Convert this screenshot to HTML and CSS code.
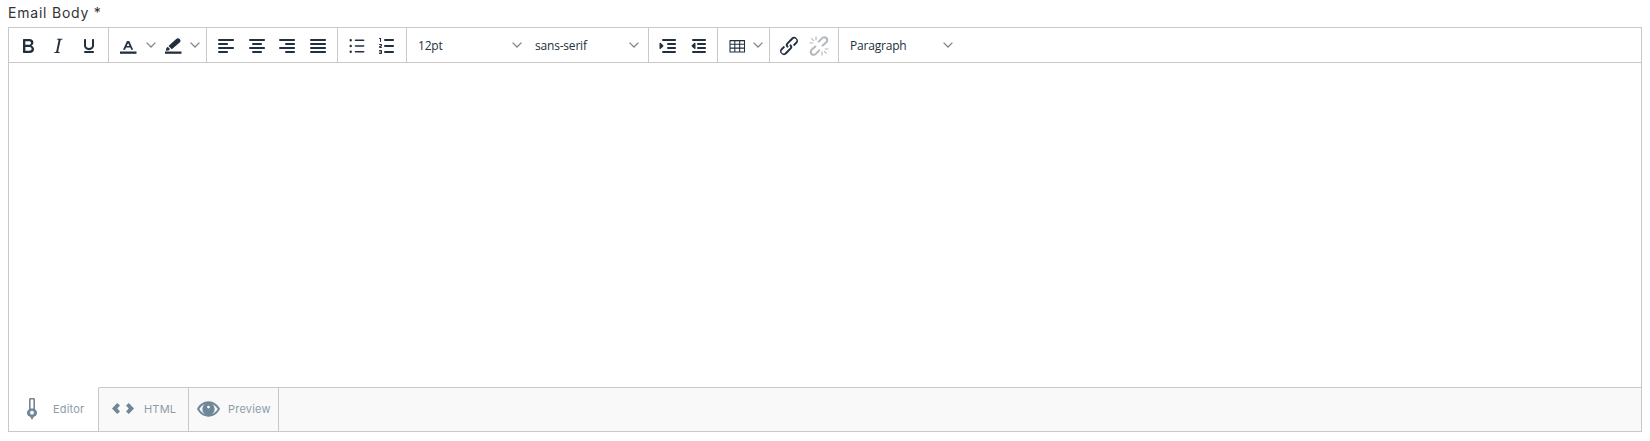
FILE: index.html
```html
<!DOCTYPE html>
<html lang="en">
<head>
<meta charset="utf-8">
<title>Email Body</title>
<link rel="stylesheet" href="styles.css">
</head>
<body>
<svg class="defs" aria-hidden="true">
  <defs>
    <symbol id="chev" viewBox="0 0 10 10"><path d="M.6 2.6 5 7 9.4 2.6" fill="none" stroke="currentColor" stroke-width="1.3"/></symbol>
    <symbol id="aleft" viewBox="0 0 24 24"><path d="M5 5h14c.6 0 1 .4 1 1s-.4 1-1 1H5a1 1 0 1 1 0-2zm0 4h8c.6 0 1 .4 1 1s-.4 1-1 1H5a1 1 0 1 1 0-2zm0 8h8c.6 0 1 .4 1 1s-.4 1-1 1H5a1 1 0 0 1 0-2zm0-4h14c.6 0 1 .4 1 1s-.4 1-1 1H5a1 1 0 0 1 0-2z"/></symbol>
    <symbol id="acenter" viewBox="0 0 24 24"><path d="M5 5h14c.6 0 1 .4 1 1s-.4 1-1 1H5a1 1 0 1 1 0-2zm3 4h8c.6 0 1 .4 1 1s-.4 1-1 1H8a1 1 0 1 1 0-2zm0 8h8c.6 0 1 .4 1 1s-.4 1-1 1H8a1 1 0 0 1 0-2zm-3-4h14c.6 0 1 .4 1 1s-.4 1-1 1H5a1 1 0 0 1 0-2z"/></symbol>
    <symbol id="aright" viewBox="0 0 24 24"><path d="M5 5h14c.6 0 1 .4 1 1s-.4 1-1 1H5a1 1 0 1 1 0-2zm6 4h8c.6 0 1 .4 1 1s-.4 1-1 1h-8a1 1 0 0 1 0-2zm0 8h8c.6 0 1 .4 1 1s-.4 1-1 1h-8a1 1 0 0 1 0-2zm-6-4h14c.6 0 1 .4 1 1s-.4 1-1 1H5a1 1 0 0 1 0-2z"/></symbol>
    <symbol id="ajust" viewBox="0 0 24 24"><path d="M5 5h14c.6 0 1 .4 1 1s-.4 1-1 1H5a1 1 0 1 1 0-2zm0 4h14c.6 0 1 .4 1 1s-.4 1-1 1H5a1 1 0 1 1 0-2zm0 4h14c.6 0 1 .4 1 1s-.4 1-1 1H5a1 1 0 0 1 0-2zm0 4h14c.6 0 1 .4 1 1s-.4 1-1 1H5a1 1 0 0 1 0-2z"/></symbol>
  </defs>
</svg>

<div class="label">Email Body *</div>

<div class="editor">
  <div class="toolbar">
    <div class="group g-format">
      <button class="btn"><svg class="ic" viewBox="0 0 24 24"><path d="M7.8 19c-.3 0-.5 0-.6-.2l-.2-.5V5.700c0-.2 0-.4.2-.5l.6-.2h5c1.500 0 2.700.3 3.500 1 .7.6 1.100 1.400 1.100 2.500a3 3 0 0 1-.6 1.900c-.4.6-1 1-1.600 1.200.4.1.9.3 1.300.6s.8.7 1 1.200c.4.4.5 1 .5 1.600 0 1.300-.4 2.300-1.300 3-.8.7-2.100 1-3.800 1H7.800zm5-8.300c.6 0 1.200-.1 1.600-.5.4-.3.6-.7.6-1.300 0-1.100-.8-1.700-2.300-1.700H9.300v3.500h3.400zm.5 6c.7 0 1.300-.1 1.700-.4.4-.4.6-.9.6-1.500s-.2-1-.7-1.400c-.4-.3-1-.4-2-.4H9.400v3.800h4z"/></svg></button>
      <button class="btn"><svg class="ic" viewBox="0 0 24 24"><path d="M16.700 4.700l-.1.9h-.3c-.6 0-1 0-1.400.3-.3.3-.4.6-.5 1.100l-2.100 9.800v.6c0 .5.4.8 1.400.8h.2l-.2.8H8l.2-.8h.2c1.100 0 1.800-.5 2-1.500l2-9.800.1-.5c0-.6-.4-.8-1.400-.8h-.3l.2-.9h5.800z"/></svg></button>
      <button class="btn"><svg class="ic" viewBox="0 0 24 24"><path d="M16 5c.6 0 1 .4 1 1v5.500a4 4 0 0 1-.4 1.800l-1 1.400a5.300 5.300 0 0 1-5.500 1 5 5 0 0 1-1.600-1c-.5-.4-.8-.9-1.100-1.400a4 4 0 0 1-.4-1.800V6c0-.6.4-1 1-1s1 .4 1 1v5.500c0 .3 0 .6.2 1l.6.7a3.300 3.300 0 0 0 2.200.8 3.400 3.400 0 0 0 2.200-.8c.3-.2.4-.5.6-.8l.2-.9V6c0-.6.4-1 1-1zM8 17h8c.6 0 1 .4 1 1s-.4 1-1 1H8a1 1 0 0 1 0-2z"/></svg></button>
    </div>
    <div class="group g-color">
      <button class="btn"><svg class="ic" viewBox="0 0 24 24"><path d="M4 17.500h16.500v2.300H4z"/><path d="M7 15.800 11 7h2.200l4 8.800h-1.900l-.9-2.200h-4.400l-.9 2.200zM10.700 12.100h2.800L12.100 8.900z"/></svg></button>
      <span class="chev-btn"><svg class="chev"><use href="#chev"/></svg></span>
      <button class="btn"><svg class="ic" viewBox="0 0 24 24"><path d="M4 17.500h16.500v2.300H4z"/><path d="M4.800 16.700l2.800-.2 1.400-1.400-2.300-2.300-1.400 1.400zM7.500 12l3.300 3.300 7.900-6.800c1.100-1 1.100-2.600 0-3.600-1-1-2.500-1-3.500 0z"/></svg></button>
      <span class="chev-btn"><svg class="chev"><use href="#chev"/></svg></span>
    </div>
    <div class="group g-align">
      <button class="btn"><svg class="ic"><use href="#aleft"/></svg></button>
      <button class="btn"><svg class="ic"><use href="#acenter"/></svg></button>
      <button class="btn"><svg class="ic"><use href="#aright"/></svg></button>
      <button class="btn"><svg class="ic"><use href="#ajust"/></svg></button>
    </div>
    <div class="group g-list">
      <button class="btn"><svg class="ic" viewBox="0 0 24 24"><path d="M10.500 5.500h8c.6 0 1 .3 1 .8s-.4.8-1 .8h-8a.8.8 0 0 1 0-1.600zm0 5.700h8c.6 0 1 .3 1 .8s-.4.8-1 .8h-8a.8.8 0 0 1 0-1.600zm0 5.700h8c.6 0 1 .3 1 .8s-.4.8-1 .8h-8a.8.8 0 0 1 0-1.600zM4.500 6.300a1.200 1.200 0 1 1 2.400 0 1.200 1.200 0 0 1-2.400 0zm0 5.700a1.200 1.200 0 1 1 2.400 0 1.200 1.200 0 0 1-2.400 0zm0 5.700a1.200 1.200 0 1 1 2.400 0 1.200 1.200 0 0 1-2.400 0z"/></svg></button>
      <button class="btn"><svg class="ic" viewBox="0 0 24 24"><path d="M10 17h8c.6 0 1 .4 1 1s-.4 1-1 1h-8a1 1 0 0 1 0-2zm0-6h8c.6 0 1 .4 1 1s-.4 1-1 1h-8a1 1 0 0 1 0-2zm0-6h8c.6 0 1 .4 1 1s-.4 1-1 1h-8a1 1 0 1 1 0-2zM6 4v3.500c0 .3-.2.5-.5.5a.5.5 0 0 1-.5-.5V5h-.5a.5.5 0 0 1 0-1H6zm-1 8.800.2.2h1.300c.3 0 .5.2.5.5s-.2.5-.5.5H4.900a1 1 0 0 1-.9-1V13c0-.4.3-.8.6-1l1.200-.4.2-.3a.2.2 0 0 0-.2-.2H4.500a.5.5 0 0 1-.5-.5c0-.3.2-.5.5-.5h1.600c.5 0 .9.4.9 1v.4c0 .4-.3.8-.6 1l-1.200.4-.2.3zM7 17v2c0 .6-.4 1-1 1H4.500a.5.5 0 0 1 0-1h1.200c.2 0 .3-.1.3-.3 0-.2-.1-.3-.3-.3H4.400a.4.4 0 1 1 0-.8h1.300c.2 0 .3-.1.3-.3 0-.2-.1-.3-.3-.3H4.500a.5.5 0 1 1 0-1H6c.6 0 1 .4 1 1z"/></svg></button>
    </div>
    <div class="group g-select">
      <div class="select s-size"><span>12pt</span><svg class="chev"><use href="#chev"/></svg></div>
      <div class="select s-font"><span>sans-serif</span><svg class="chev"><use href="#chev"/></svg></div>
    </div>
    <div class="group g-indent">
      <button class="btn"><svg class="ic" viewBox="0 0 24 24"><path d="M7 5h12c.6 0 1 .4 1 1s-.4 1-1 1H7a1 1 0 1 1 0-2zm5 4h7c.6 0 1 .4 1 1s-.4 1-1 1h-7a1 1 0 0 1 0-2zm0 4h7c.6 0 1 .4 1 1s-.4 1-1 1h-7a1 1 0 0 1 0-2zm-5 4h12a1 1 0 0 1 0 2H7a1 1 0 0 1 0-2zm-2.600-8.200 2.800 2.500c.3.300.3.800 0 1.100l-2.800 2.500c-.300.300-.9.100-.9-.4V9.200c0-.5.600-.7.900-.4z"/></svg></button>
      <button class="btn"><svg class="ic" viewBox="0 0 24 24"><path d="M7 5h12c.6 0 1 .4 1 1s-.4 1-1 1H7a1 1 0 1 1 0-2zm5 4h7c.6 0 1 .4 1 1s-.4 1-1 1h-7a1 1 0 0 1 0-2zm0 4h7c.6 0 1 .4 1 1s-.4 1-1 1h-7a1 1 0 0 1 0-2zm-5 4h12a1 1 0 0 1 0 2H7a1 1 0 0 1 0-2zm1.600-8.200-2.800 2.500c-.3.300-.3.800 0 1.100l2.800 2.500c.3.300.9.100.9-.4V9.200c0-.5-.6-.7-.9-.4z"/></svg></button>
    </div>
    <div class="group g-table">
      <button class="btn"><svg class="ic" viewBox="0 0 24 24"><path d="M5 6.500h14.500v11.500H5zM5 10.300h14.500M5 14.100h14.500M9.800 6.500V18M14.700 6.500V18" fill="none" stroke="currentColor" stroke-width="1.050"/><path d="M5 6h14.500v1.300H5z"/></svg></button>
      <span class="chev-btn tight"><svg class="chev"><use href="#chev"/></svg></span>
    </div>
    <div class="group g-link">
      <button class="btn"><svg class="ic" viewBox="0 0 24 24"><path d="M6.200 12.300a1 1 0 0 1 1.400 1.400l-2 2a2 2 0 1 0 2.600 2.800l4.800-4.800a1 1 0 0 0 0-1.400 1 1 0 1 1 1.400-1.300 2.900 2.900 0 0 1 0 4L9.600 20a3.900 3.900 0 0 1-5.500-5.500l2-2zm11.600-.6a1 1 0 0 1-1.400-1.400l2-2a2 2 0 1 0-2.600-2.800L11 10.300a1 1 0 0 0 0 1.400A1 1 0 1 1 9.600 13a2.900 2.900 0 0 1 0-4L14.400 4a3.900 3.900 0 0 1 5.500 5.500l-2 2z"/></svg></button>
      <button class="btn off"><svg class="ic" viewBox="0 0 24 24"><path d="M8 11.600a1 1 0 0 1 1.300 1.400l-3.400 3a2 2 0 1 0 2.700 2.700l3.200-3.200a1 1 0 0 1 1.400 1.300L10 20.100a4 4 0 1 1-5.500-5.600zM16 12.400a1 1 0 0 1-1.300-1.400l3.400-3a2 2 0 1 0-2.700-2.700l-3.200 3.200a1 1 0 0 1-1.400-1.300L14 3.900a4 4 0 1 1 5.500 5.600zM8.400 2.500h1.200v3.700H8.400zM2.500 8.400h3.700v1.200H2.500zM3.900 4.700l.8-.8 2.600 2.600-.8.800zM14.400 17.800h1.200v3.700h-1.200zM17.800 14.400h3.700v1.200h-3.700zM16.700 17.500l.8-.8 2.600 2.600-.8.800z"/></svg></button>
    </div>
    <div class="group g-block">
      <div class="select s-block"><span>Paragraph</span><svg class="chev"><use href="#chev"/></svg></div>
    </div>
  </div>

  <div class="content"></div>

  <div class="tabs">
    <div class="tab active">
      <svg class="tab-ic brush" viewBox="0 0 10 22"><path fill-rule="evenodd" d="M2 1.300C2 .6 2.600 0 3.300 0h3.400C7.400 0 8 .6 8 1.300V11.200c1.200.7 2 2 2 3.500 0 2-1.300 3.700-3.200 4.100L5 22l-1.800-3.200C1.300 18.400 0 16.700 0 14.700c0-1.500.8-2.800 2-3.500zM3.600 1.600v8.900h2.800V1.600zM5 12.800a1.900 1.900 0 1 0 0 3.800 1.900 1.900 0 0 0 0-3.800z"/></svg>
      <span>Editor</span>
    </div>
    <div class="tab tab-html">
      <svg class="tab-ic code" viewBox="0 0 22 11"><path d="M5.200 0 0 5.500 5.200 11 8 8.500 5.300 5.500 8 2.500zM16.800 0 14 2.500 16.700 5.500 14 8.500 16.800 11 22 5.500z"/></svg>
      <span>HTML</span>
    </div>
    <div class="tab">
      <svg class="tab-ic eye" viewBox="0 0 24 16"><path fill-rule="evenodd" d="M12 0C6.800 0 2.400 3.300 0 8c2.400 4.700 6.800 8 12 8s9.600-3.300 12-8c-2.400-4.700-6.800-8-12-8zM2.400 8C3.900 5.600 5.800 3.700 8.200 2.700A6.500 6.500 0 0 0 5.500 8a6.500 6.500 0 0 0 2.700 5.300C5.800 12.300 3.900 10.400 2.400 8zm13.400 5.300A6.500 6.500 0 0 0 18.500 8a6.500 6.500 0 0 0-2.700-5.300c2.400 1 4.300 2.900 5.800 5.300-1.500 2.400-3.400 4.300-5.800 5.300zM12 4.500a1.500 1.500 0 0 1 0 3 1.500 1.500 0 0 1 0-3z"/></svg>
      <span>Preview</span>
    </div>
    <div class="tab-rest"></div>
  </div>
</div>
</body>
</html>
```
FILE: styles.css
```css
* { box-sizing: border-box; }
html, body { margin: 0; padding: 0; background: #fff; }
body { padding: 4px 8px 0; height: 441px; overflow: hidden; }
.defs { display: none; }
.label {
  font-family: Inter, "Open Sans", sans-serif;
  font-size: 14px;
  line-height: 17px;
  height: 23px;
  letter-spacing: .78px;
  color: #333;
}
.editor {
  width: 1634px;
  height: 405px;
  border: 1px solid #c8c8c8;
  display: flex;
  flex-direction: column;
}
.toolbar {
  height: 35px;
  flex: none;
  display: flex;
  border-bottom: 1px solid #c8c8c8;
}
.group {
  display: flex;
  align-items: center;
  border-right: 1px solid #c8c8c8;
  padding: 0 4px;
}
.g-format { width: 100px; }
.g-color { width: 98px; }
.g-align { width: 131px; }
.g-list { width: 69px; }
.g-select { width: 242px; padding: 0; }
.g-indent { width: 69px; }
.g-table { width: 52px; }
.g-link { width: 69px; }
.g-block { border-right: 0; padding: 0; }
.btn {
  width: 30.500px;
  height: 30px;
  padding: 1px 0 0;
  border: 0;
  background: none;
  display: flex;
  align-items: center;
  justify-content: center;
  color: #222f3e;
}
.btn.off { color: #b3b8be; }
.ic { width: 24px; height: 24px; fill: currentColor; display: block; }
.chev-btn {
  width: 14px;
  display: flex;
  justify-content: center;
  color: #8c96a0;
}
.chev { width: 10px; height: 10px; color: #7d8792; display: block; flex: none; }
.select {
  font-family: "Open Sans", "Noto Sans", sans-serif;
  font-size: 12px;
  letter-spacing: -.2px;
  color: #222f3e;
  display: flex;
  align-items: center;
  justify-content: space-between;
  height: 30px;
}
.s-size { width: 116px; padding: 0 1px 0 11px; }
.s-font { width: 117px; padding: 0 1px 0 12px; }
.s-block { width: 116px; padding: 0 2px 0 11px; }
.content { flex: 1; background: #fff; }
.tabs {
  height: 44px;
  flex: none;
  display: flex;
  background: #f9f9f9;
  border-top: 1px solid #c8c8c8;
}
.tab {
  width: 90px;
  display: flex;
  align-items: center;
  border-right: 1px solid #c8c8c8;
  font-family: Inter, "Open Sans", sans-serif;
  font-size: 11px;
  letter-spacing: .2px;
  color: #8e9ca8;
  padding: 0 0 2px 14px;
  gap: 10px;
}
.tab-html { padding-left: 13px; }
.tab.active { background: #fff; margin-top: -1px; border-top: 1px solid #fff; padding-left: 18px; gap: 16px; }
.tab-rest { flex: 1; }
.tab-ic { fill: #6f8796; display: block; flex: none; }
.brush { width: 10px; height: 22px; }
.code { width: 22px; height: 11px; }
.eye { width: 23px; height: 16px; margin: 0 -2px 0 -6px; }
```
